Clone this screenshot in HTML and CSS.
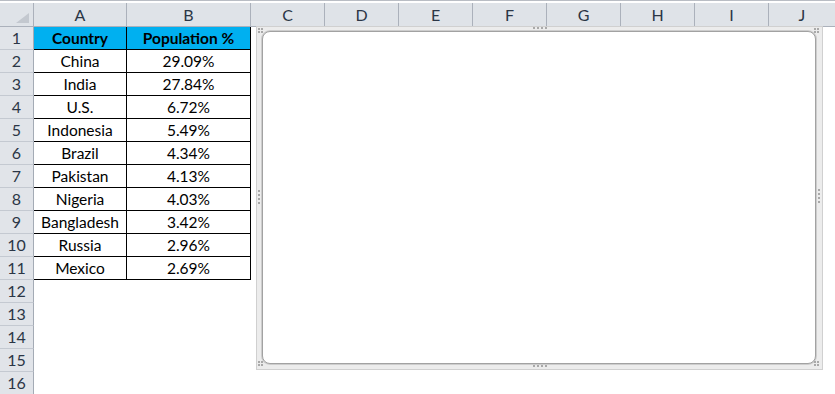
FILE: index.html
```html
<!DOCTYPE html>
<html>
<head>
<meta charset="utf-8">
<link rel="stylesheet" href="styles.css">
</head>
<body>
<div class="topline"></div>
<div class="sheet">
  <div class="row hdr">
    <div class="corner"><svg width="33" height="23" viewBox="0 0 33 23"><polygon points="29,10 29,20 16,20" fill="#c3c8cf"/></svg></div>
    <div class="ch a">A</div><div class="ch b">B</div><div class="ch c">C</div><div class="ch c">D</div><div class="ch c">E</div><div class="ch c">F</div><div class="ch c">G</div><div class="ch c">H</div><div class="ch c">I</div><div class="ch last">J</div>
  </div>
  <div class="row"><div class="rh">1</div><div class="cell a t head">Country</div><div class="cell b t head">Population %</div><div class="fill"></div></div>
  <div class="row"><div class="rh">2</div><div class="cell a t">China</div><div class="cell b t">29.09%</div><div class="fill"></div></div>
  <div class="row"><div class="rh">3</div><div class="cell a t">India</div><div class="cell b t">27.84%</div><div class="fill"></div></div>
  <div class="row"><div class="rh">4</div><div class="cell a t">U.S.</div><div class="cell b t">6.72%</div><div class="fill"></div></div>
  <div class="row"><div class="rh">5</div><div class="cell a t">Indonesia</div><div class="cell b t">5.49%</div><div class="fill"></div></div>
  <div class="row"><div class="rh">6</div><div class="cell a t">Brazil</div><div class="cell b t">4.34%</div><div class="fill"></div></div>
  <div class="row"><div class="rh">7</div><div class="cell a t">Pakistan</div><div class="cell b t">4.13%</div><div class="fill"></div></div>
  <div class="row"><div class="rh">8</div><div class="cell a t">Nigeria</div><div class="cell b t">4.03%</div><div class="fill"></div></div>
  <div class="row"><div class="rh">9</div><div class="cell a t">Bangladesh</div><div class="cell b t">3.42%</div><div class="fill"></div></div>
  <div class="row"><div class="rh">10</div><div class="cell a t">Russia</div><div class="cell b t">2.96%</div><div class="fill"></div></div>
  <div class="row"><div class="rh">11</div><div class="cell a t">Mexico</div><div class="cell b t">2.69%</div><div class="fill"></div></div>
  <div class="row"><div class="rh">12</div><div class="cell a"></div><div class="cell b"></div><div class="fill"></div></div>
  <div class="row"><div class="rh">13</div><div class="cell a"></div><div class="cell b"></div><div class="fill"></div></div>
  <div class="row"><div class="rh">14</div><div class="cell a"></div><div class="cell b"></div><div class="fill"></div></div>
  <div class="row"><div class="rh">15</div><div class="cell a"></div><div class="cell b"></div><div class="fill"></div></div>
  <div class="row"><div class="rh">16</div><div class="cell a"></div><div class="cell b"></div><div class="fill"></div></div>

  <div class="chart">
    <div class="chart-inner"></div>
    <svg class="handles" width="567" height="344" viewBox="0 0 567 344">
      <g fill="#a9a9a9">
        <rect x="2" y="2" width="2" height="2"/><rect x="5" y="2" width="2" height="2"/><rect x="2" y="5" width="2" height="2"/><rect x="5" y="5" width="2" height="2"/>
        <rect x="558" y="2" width="2" height="2"/><rect x="561" y="2" width="2" height="2"/><rect x="558" y="5" width="2" height="2"/><rect x="561" y="5" width="2" height="2"/>
        <rect x="2" y="335" width="2" height="2"/><rect x="5" y="335" width="2" height="2"/><rect x="2" y="338" width="2" height="2"/><rect x="5" y="338" width="2" height="2"/>
        <rect x="558" y="335" width="2" height="2"/><rect x="561" y="335" width="2" height="2"/><rect x="558" y="338" width="2" height="2"/><rect x="561" y="338" width="2" height="2"/>
        <rect x="2" y="164" width="2" height="2"/><rect x="2" y="168" width="2" height="2"/><rect x="2" y="172" width="2" height="2"/><rect x="2" y="176" width="2" height="2"/>
        <rect x="562" y="163" width="2" height="2"/><rect x="562" y="167" width="2" height="2"/><rect x="562" y="171" width="2" height="2"/><rect x="562" y="175" width="2" height="2"/>
        <rect x="277" y="1" width="2" height="2"/><rect x="281" y="1" width="2" height="2"/><rect x="285" y="1" width="2" height="2"/><rect x="289" y="1" width="2" height="2"/>
        <rect x="277" y="339" width="2" height="2"/><rect x="281" y="339" width="2" height="2"/><rect x="285" y="339" width="2" height="2"/><rect x="289" y="339" width="2" height="2"/>
      </g>
    </svg>
  </div>
</div>
</body>
</html>
```

FILE: styles.css
```css
* { box-sizing: border-box; }
html, body { margin: 0; padding: 0; background: #ffffff; }
body {
  font-family: Lato, "Open Sans", "Liberation Sans", sans-serif;
  font-size: 15.5px;
  color: #000;
  overflow: hidden;
  width: 835px;
  height: 394px;
}
.topline {
  height: 1px;
  background: #b9bdc4;
  margin-bottom: 2px;
}
.sheet {
  position: relative;
}
.row {
  display: flex;
  height: 23px;
}
.row.hdr {
  height: 24px;
}
.corner, .ch {
  background: #dfe3e8;
  border-right: 1px solid #abb1bb;
  border-bottom: 1px solid #abb1bb;
  color: #2b3646;
  text-align: center;
  line-height: 23px;
  font-size: 16px;
}
.corner { width: 34px; }
.corner svg { display: block; }
.ch.a { width: 93px; }
.ch.b { width: 124px; }
.ch.c { width: 74px; }
.ch.last { flex: 1; border-right: none; }
.rh {
  width: 34px;
  background: #e1e4e9;
  border-right: 1px solid #a4abb5;
  border-bottom: 1px solid #c4c9d1;
  color: #2b3646;
  text-align: center;
  line-height: 22px;
  font-size: 16px;
}
.cell {
  border-right: 1px solid transparent;
  border-bottom: 1px solid transparent;
  text-align: center;
  line-height: 22px;
  white-space: nowrap;
}
.cell.a { width: 93px; }
.cell.b { width: 124px; }
.cell.t {
  border-right-color: #000;
  border-bottom-color: #000;
}
.cell.head {
  background: #00b0f0;
  font-weight: bold;
}
.fill { flex: 1; }

.chart {
  position: absolute;
  left: 256px;
  top: 23px;
  width: 567px;
  height: 344px;
  background: #ececec;
  border: 1px solid #d0d0d0;
  padding: 4px 6px 5px 5px;
}
.chart-inner {
  width: 100%;
  height: 100%;
  background: #ffffff;
  border: 1px solid #a2a2a2;
  border-radius: 8px;
  box-shadow: 0 0 0 1px #cdcdcd;
}
.handles {
  position: absolute;
  left: -1px;
  top: -1px;
}
```
